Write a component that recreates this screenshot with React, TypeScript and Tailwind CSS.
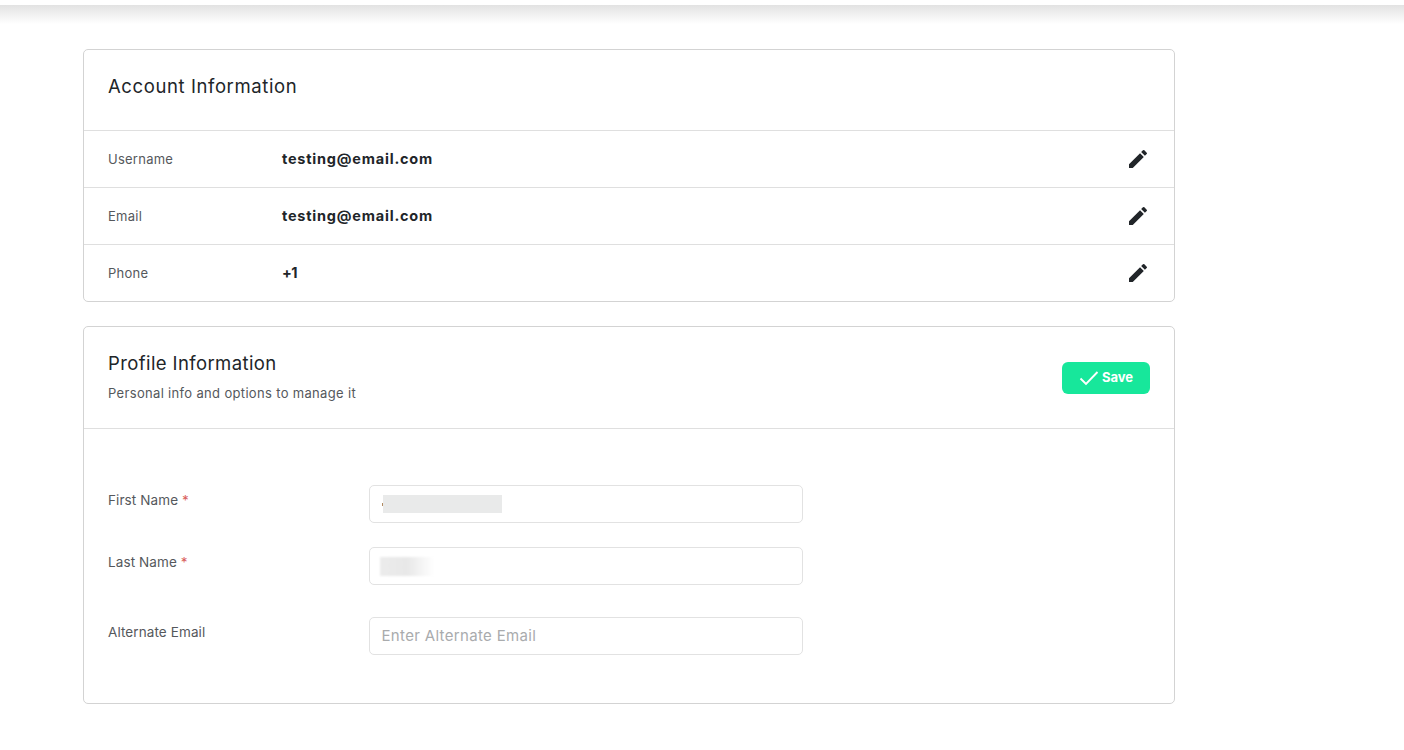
import React from 'react';
import { MdEdit } from 'react-icons/md';

const accountRows = [
  { label: 'Username', value: 'testing@email.com' },
  { label: 'Email', value: 'testing@email.com' },
  { label: 'Phone', value: '+1' },
];

function Field({ label, required, className, children }: { label: string; required?: boolean; className?: string; children: React.ReactNode }) {
  return (
    <div className={`flex items-start ${className ?? ''}`}>
      <label className="w-[261px] pt-[6px] text-[13.5px] leading-[18px] tracking-[0.1px] text-[#55585c]">
        {label}
        {required && <span className="text-[#d9605c]"> *</span>}
      </label>
      {children}
    </div>
  );
}

export default function App() {
  return (
    <div className="min-h-screen bg-white font-['Inter',sans-serif] text-[#212529]">
      <div className="h-[5px] bg-white" />
      <div className="h-[19px] bg-gradient-to-b from-[#e2e2e2] to-white" />

      <main className="ml-[83px] w-[1092px] pt-[25px]">
        <section className="rounded-[5px] border border-[#d3d3d3]">
          <div className="h-[81px] border-b border-[#dfdfdf] pl-6 pt-[23px]">
            <h2 className="text-[18.5px] leading-[26px] font-normal tracking-[0.6px]">Account Information</h2>
          </div>
          {accountRows.map((row, i) => (
            <div key={row.label} className={`flex items-center pl-6 pr-[24px] ${i < 2 ? 'h-[57px] border-b border-[#dfdfdf]' : 'h-[56px]'}`}>
              <span className="w-[174px] pt-[1px] text-[13px] tracking-[0.25px] text-[#55585c]">{row.label}</span>
              <span className={`flex-1 text-[14.5px] font-bold text-[#212529] ${i < 2 ? 'tracking-[0.78px]' : 'tracking-[-0.5px]'}`}>{row.value}</span>
              <MdEdit size={24} className="text-[#212529]" />
            </div>
          ))}
        </section>

        <section className="mt-[24px] h-[378px] rounded-[5px] border border-[#d3d3d3]">
          <div className="flex h-[102px] items-center justify-between border-b border-[#dfdfdf] pl-6 pr-6">
            <div className="pb-[3px]">
              <h2 className="text-[18.5px] leading-[26px] font-normal tracking-[0.4px]">Profile Information</h2>
              <p className="mt-[8px] text-[13px] leading-[18px] tracking-[0.33px] text-[#55585c]">Personal info and options to manage it</p>
            </div>
            <button className="flex h-8 w-[88px] items-center justify-center gap-[3px] rounded-[6px] bg-[#17e79b] text-[13px] font-bold text-white">
              <svg width="20" height="16" viewBox="0 0 20 16" fill="none" stroke="currentColor" strokeWidth="1.9">
                <path d="M1.5 8.5 L7 14 L18.5 2" />
              </svg>
              Save
            </button>
          </div>

          <div className="pl-6 pt-[56px]">
            <Field label="First Name" required>
              <div className="flex h-[38px] w-[434px] items-center rounded-[5px] border border-[#e2e2e2] pl-[12px]">
                <div className="h-[3px] w-[1px] bg-[#b08a60]" />
                <div className="h-[18px] w-[119px] bg-[#e9eaea]" />
              </div>
            </Field>
            <Field label="Last Name" required className="mt-[24px]">
              <div className="flex h-[38px] w-[434px] items-center rounded-[5px] border border-[#e2e2e2] pl-[10px]">
                <div className="h-[19px] w-[54px] bg-gradient-to-r from-[#ececec] via-[#e8e8e8] to-white blur-[1px]" />
              </div>
            </Field>
            <Field label="Alternate Email" className="mt-[32px]">
              <input
                placeholder="Enter Alternate Email"
                className="h-[38px] w-[434px] rounded-[5px] border border-[#e2e2e2] pb-[2px] pl-[11.5px] pr-3 text-[15px] tracking-[0.33px] outline-none placeholder:text-[#a9abad]"
              />
            </Field>
          </div>
        </section>
      </main>
    </div>
  );
}
